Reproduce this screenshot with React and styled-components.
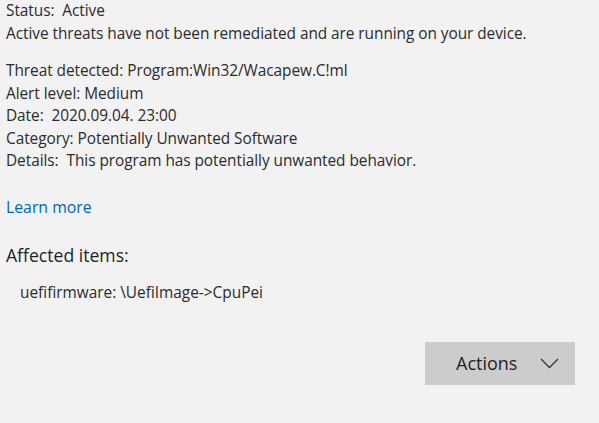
import React from 'react';
import styled, { createGlobalStyle } from 'styled-components';

const GlobalStyle = createGlobalStyle`
  html, body {
    margin: 0;
    background: #f2f2f2;
  }
  body {
    font-family: "Segoe UI", "Open Sans", "Noto Sans", sans-serif;
    color: #2b2b2b;
  }
`

const Page = styled.div`
  width: 599px;
  height: 423px;
  box-sizing: border-box;
  padding: 0 6px;
  display: flex;
  flex-direction: column;
  overflow: hidden;
`

const Block = styled.div`
  display: flex;
  flex-direction: column;
  margin-top: ${p => p.$gap || 0}px;
`

const Line = styled.div`
  font-size: 15.4px;
  line-height: 22.5px;
  white-space: nowrap;
  letter-spacing: -0.05px;
`

const Link = styled.a`
  font-size: 15.8px;
  line-height: 22px;
  color: #0067b8;
  text-decoration: none;
  cursor: pointer;
  margin-top: 23px;
  align-self: flex-start;
`

const Heading = styled.div`
  font-size: 17.6px;
  line-height: 24px;
  color: #1f1f1f;
  margin-top: 25px;
`

const Item = styled.div`
  font-size: 15.4px;
  line-height: 22px;
  padding-left: 14px;
  margin-top: 15px;
`

const Footer = styled.div`
  display: flex;
  justify-content: flex-end;
  padding-right: 18px;
  margin-top: 38px;
`

const ActionsButton = styled.button`
  width: 150px;
  height: 43px;
  border: 0;
  background: #cccccc;
  color: #1f1f1f;
  font-family: inherit;
  font-size: 18px;
  display: flex;
  align-items: center;
  padding: 0 0 0 31px;
  gap: 23px;
  cursor: pointer;
`

const Chevron = () => (
  <svg width="19" height="11" viewBox="0 0 19 11" fill="none">
    <path d="M1 1 L9.5 9.5 L18 1" stroke="#333" strokeWidth="1.3" />
  </svg>
)

export default function App() {
  return (
    <>
      <GlobalStyle />
      <Page>
        <Block>
          <Line>Status:&nbsp; Active</Line>
          <Line>Active threats have not been remediated and are running on your device.</Line>
        </Block>
        <Block $gap={15}>
          <Line>Threat detected: Program:Win32/Wacapew.C!ml</Line>
          <Line>Alert level: Medium</Line>
          <Line>Date:&nbsp; 2020.09.04. 23:00</Line>
          <Line>Category: Potentially Unwanted Software</Line>
          <Line>Details:&nbsp; This program has potentially unwanted behavior.</Line>
        </Block>
        <Link>Learn more</Link>
        <Heading>Affected items:</Heading>
        <Item>uefifirmware: \UefiImage-&gt;CpuPei</Item>
        <Footer>
          <ActionsButton>
            <span>Actions</span>
            <Chevron />
          </ActionsButton>
        </Footer>
      </Page>
    </>
  )
}
